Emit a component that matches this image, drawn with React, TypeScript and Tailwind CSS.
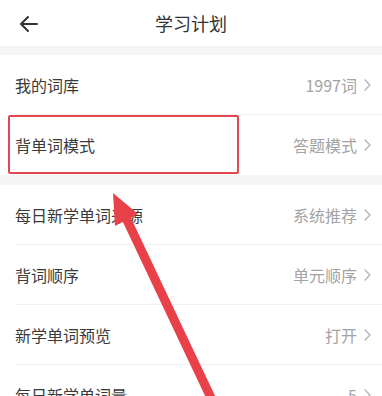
const font = { fontFamily: '"Noto Sans CJK SC", "Noto Sans", sans-serif' }

type Item = { label: string; value: string; boxed?: boolean }

const groupA: Item[] = [
  { label: '我的词库', value: '1997词' },
  { label: '背单词模式', value: '答题模式', boxed: true },
]

const groupB: Item[] = [
  { label: '每日新学单词来源', value: '系统推荐' },
  { label: '背词顺序', value: '单元顺序' },
  { label: '新学单词预览', value: '打开' },
  { label: '每日新学单词量', value: '5' },
]

function Chevron() {
  return (
    <svg
      className="ml-[7px]"
      width="7"
      height="12"
      viewBox="0 0 7 12"
      fill="none"
      stroke="#b3b3b3"
      strokeWidth="1.4"
      strokeLinecap="round"
      strokeLinejoin="round"
    >
      <path d="M1 1l5 5-5 5" />
    </svg>
  )
}

function Row({ item, last }: { item: Item; last?: boolean }) {
  return (
    <div className="relative bg-white">
      <div
        className={
          'ml-[15px] flex h-[60px] items-center justify-between pr-[11px] ' +
          (last ? '' : 'border-b border-[#f0f0f0]')
        }
      >
        <span className="text-[16px] text-[#3a3a3a]">{item.label}</span>
        <span className="flex items-center text-[16px] text-[#a3a3a3]">
          {item.value}
          <Chevron />
        </span>
      </div>
      {item.boxed && (
        <div className="absolute left-[8px] top-[0px] h-[59px] w-[231px] rounded-[2px] border-2 border-[#e2464e]" />
      )}
    </div>
  )
}

export default function App() {
  return (
    <div className="relative h-[396px] w-[382px] overflow-hidden bg-white" style={font}>
      <header className="relative flex h-[46px] items-center justify-center bg-white">
        <svg
          className="absolute left-[19px] top-[15px]"
          width="19"
          height="18"
          viewBox="0 0 19 18"
          fill="none"
          stroke="#333"
          strokeWidth="2"
          strokeLinecap="round"
          strokeLinejoin="round"
        >
          <path d="M18 9H2M9 2L2 9l7 7" />
        </svg>
        <h1 className="text-[18px] text-[#333333]">学习计划</h1>
      </header>

      <div className="h-[9px] bg-[#f5f5f5]" />
      {groupA.map((it, i) => (
        <Row key={it.label} item={it} last={i === groupA.length - 1} />
      ))}
      <div className="h-[10px] bg-[#f5f5f5]" />
      {groupB.map((it) => (
        <Row key={it.label} item={it} />
      ))}

      {/* red annotation arrow */}
      <svg className="pointer-events-none absolute left-0 top-0" width="382" height="396">
        <line x1="126" y1="218" x2="212" y2="400" stroke="#e8414a" strokeWidth="9" />
        <polygon points="113,193 138,214 115,226" fill="#e8414a" />
      </svg>
    </div>
  )
}
